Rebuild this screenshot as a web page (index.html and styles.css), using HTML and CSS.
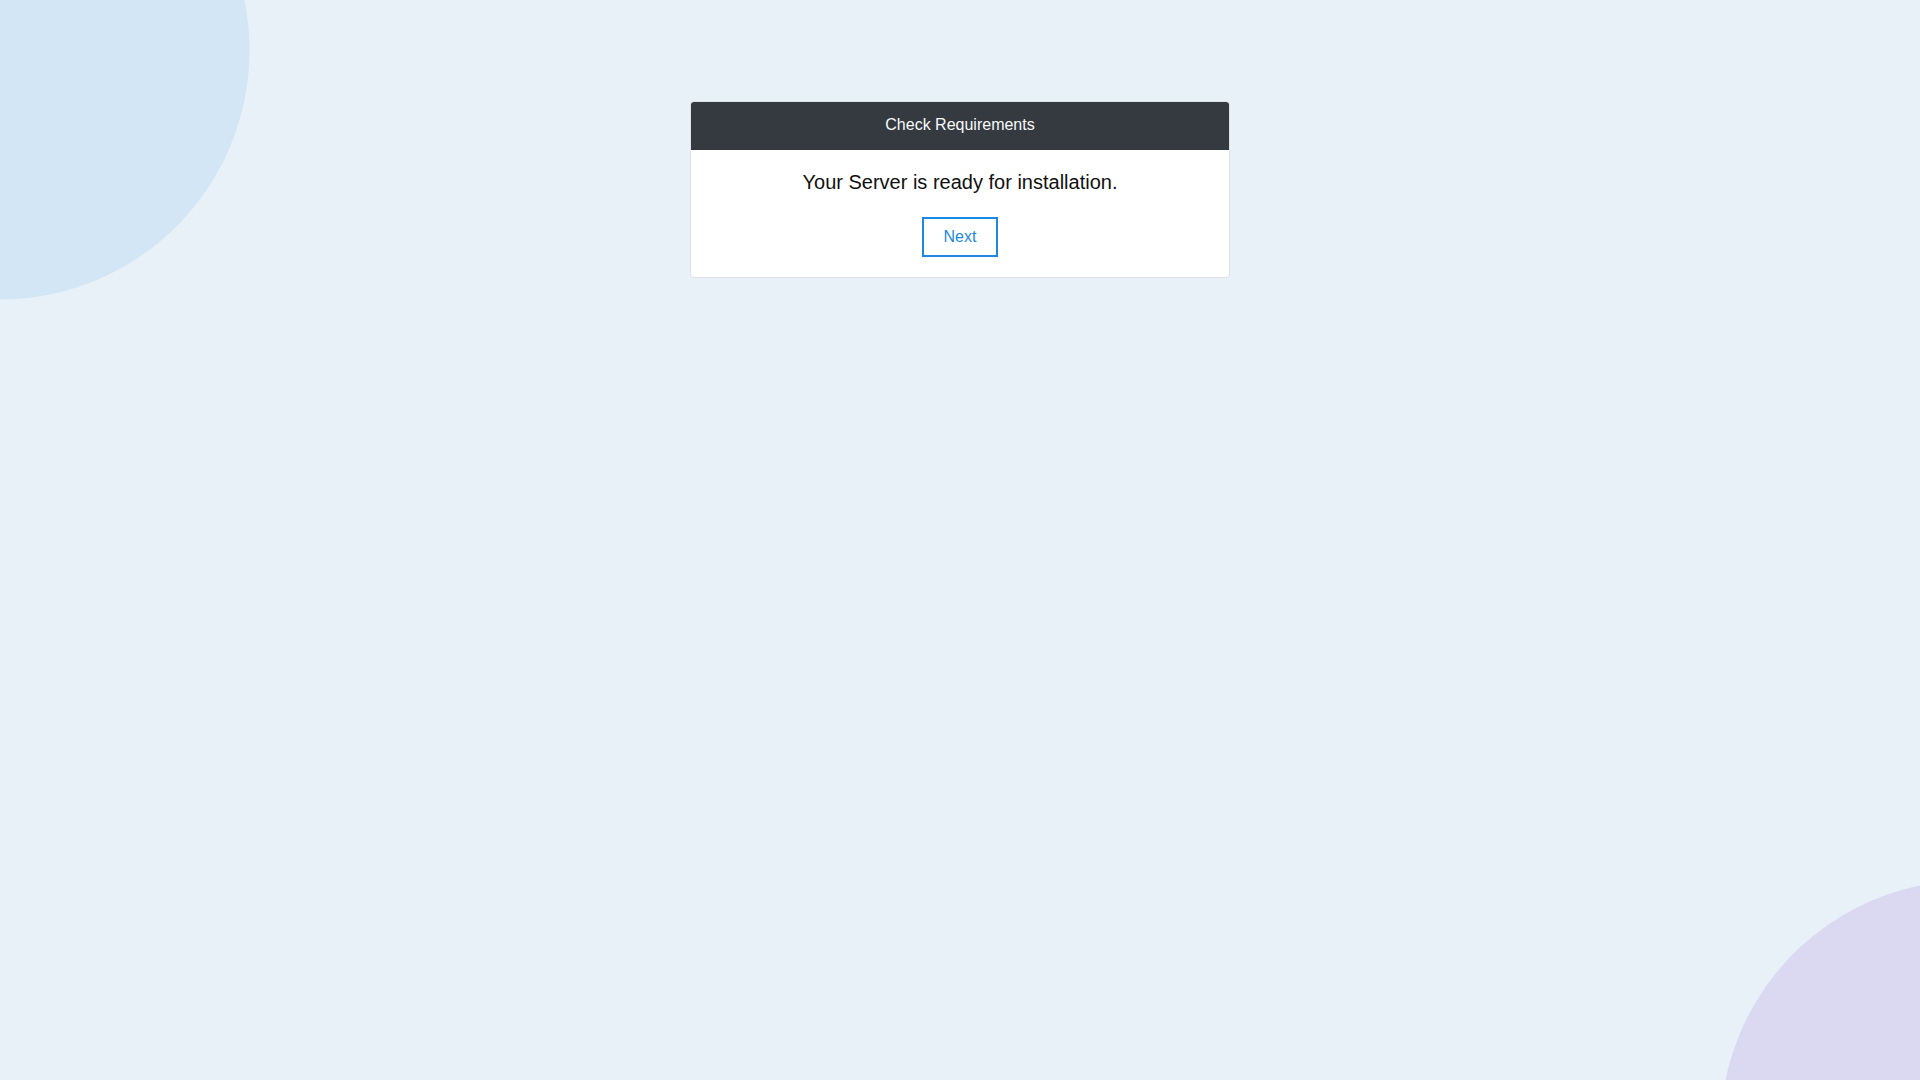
FILE: index.html
```html
<!DOCTYPE html>
<html lang="en">
<head>
<meta charset="utf-8">
<title>Check Requirements</title>
<link rel="stylesheet" href="styles.css">
</head>
<body>
<main class="page">
  <section class="card">
    <header class="card-header">Check Requirements</header>
    <div class="card-body">
      <p class="message">Your Server is ready for installation.</p>
      <button class="btn-next" type="button">Next</button>
    </div>
  </section>
</main>
</body>
</html>
```

FILE: styles.css
```css
html, body {
  margin: 0;
  padding: 0;
}
body {
  width: 1920px;
  height: 1080px;
  overflow: hidden;
  background:
    radial-gradient(circle 250px at 0 50px, #d3e6f5 249px, rgba(211, 230, 245, 0) 250px),
    radial-gradient(circle 250px at 1970px 1130px, #dbd9f1 249px, rgba(219, 217, 241, 0) 250px),
    #e8f1f8;
  font-family: "Liberation Sans", Arial, sans-serif;
}
.page {
  display: flex;
  justify-content: center;
  padding-top: 101px;
}
.card {
  width: 540px;
  box-sizing: border-box;
  background: #ffffff;
  border: 1px solid #dee2e6;
  border-radius: 4px;
  overflow: hidden;
}
.card-header {
  background: #343a40;
  color: #f8f9fa;
  font-size: 16px;
  line-height: 20px;
  padding: 13px 0 15px;
  text-align: center;
}
.card-body {
  display: flex;
  flex-direction: column;
  align-items: center;
  padding: 20px 0 20px;
}
.message {
  margin: 0;
  font-size: 20px;
  line-height: 24px;
  color: #111111;
}
.btn-next {
  margin-top: 23px;
  height: 40px;
  box-sizing: border-box;
  padding: 0 20px;
  border: 2px solid #1e88e5;
  border-radius: 0;
  background: #ffffff;
  color: #1e88e5;
  font-family: "Liberation Sans", Arial, sans-serif;
  font-size: 16px;
  line-height: 20px;
  cursor: pointer;
}
```
